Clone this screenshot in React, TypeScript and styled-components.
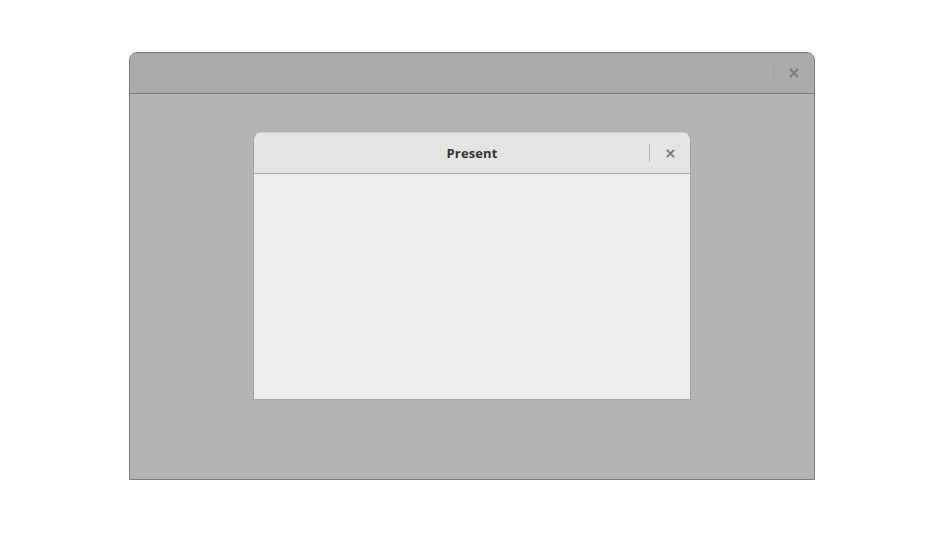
import React, { type JSX } from "react";
import styled, { createGlobalStyle } from "styled-components";

const Global = createGlobalStyle`
  html, body {
    margin: 0;
    background: #ffffff;
    font-family: "Open Sans", "DejaVu Sans", sans-serif;
  }
`;

const Page = styled.div`
  padding: 52px 0 0 129px;
`;

const Window = styled.div`
  width: 684px;
  height: 426px;
  border: 1px solid #7b7b7b;
  border-radius: 8px 8px 0 0;
  background: #b3b3b2;
  display: flex;
  flex-direction: column;
  overflow: hidden;
`;

const Header = styled.div<{ $tone: "dim" | "light" }>`
  height: 40px;
  flex: none;
  display: grid;
  grid-template-columns: 1fr auto 1fr;
  align-items: center;
  background: ${(p) => (p.$tone === "dim" ? "#ababab" : "#e4e4e4")};
  border-bottom: 1px solid ${(p) => (p.$tone === "dim" ? "#7b7b7b" : "#a4a4a4")};
`;

const Title = styled.div`
  grid-column: 2;
  font-size: 13px;
  font-weight: 700;
  color: #333333;
  letter-spacing: 0.1px;
`;

const Actions = styled.div`
  grid-column: 3;
  justify-self: end;
  display: flex;
  align-items: center;
  height: 100%;
`;

const Divider = styled.span<{ $h: number; $c: string }>`
  width: 1px;
  height: ${(p) => p.$h}px;
  background: ${(p) => p.$c};
`;

const CloseButton = styled.button<{ $c: string }>`
  width: 40px;
  height: 100%;
  border: 0;
  padding: 0;
  background: transparent;
  display: flex;
  align-items: center;
  justify-content: center;
  color: ${(p) => p.$c};
`;

const WindowBody = styled.div`
  flex: 1;
  display: flex;
  justify-content: center;
  padding-top: 38px;
`;

const Dialog = styled.div`
  width: 436px;
  height: 266px;
  border: 1px solid #a3a3a3;
  border-top-color: #cfcfcf;
  border-radius: 8px 8px 0 0;
  background: #ededec;
  display: flex;
  flex-direction: column;
  overflow: hidden;
`;

const CloseIcon = ({ size }: { size: number }) => (
  <svg width={size} height={size} viewBox="0 0 10 10" aria-hidden>
    <path d="M1 1 L9 9 M9 1 L1 9" stroke="currentColor" strokeWidth="2.2" strokeLinecap="butt" />
  </svg>
);

export default function App(): JSX.Element {
  return (
    <>
      <Global />
      <Page>
        <Window>
          <Header $tone="dim">
            <Actions>
              <Divider $h={22} $c="#a2a2a2" />
              <CloseButton $c="#7c7c7c" aria-label="Close">
                <CloseIcon size={10} />
              </CloseButton>
            </Actions>
          </Header>
          <WindowBody>
            <Dialog>
              <Header $tone="light">
                <Title>Present</Title>
                <Actions>
                  <Divider $h={18} $c="#b4b4b4" />
                  <CloseButton $c="#7a7a7a" aria-label="Close">
                    <CloseIcon size={9} />
                  </CloseButton>
                </Actions>
              </Header>
            </Dialog>
          </WindowBody>
        </Window>
      </Page>
    </>
  );
}
